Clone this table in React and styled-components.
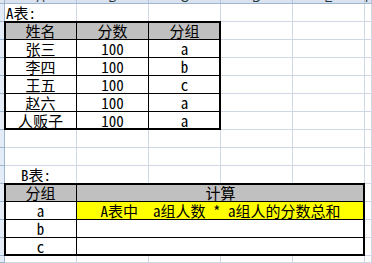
import { Fragment } from "react";
import styled, { createGlobalStyle } from "styled-components";

const GRAY = "#c0c0c0";
const YELLOW = "#ffff00";
const GRID = "#d0d7e5";
const HEAD_LINE = "#9eb6ce";

const GlobalStyle = createGlobalStyle`
  html, body {
    margin: 0;
    padding: 0;
    background: #fff;
  }
  body {
    width: 372px;
    height: 263px;
    overflow: hidden;
  }
`;

const COLS = ["A", "B", "C", "D", "E", "F"];

const tableA = {
  head: ["姓名", "分数", "分组"],
  rows: [
    ["张三", 100, "a"],
    ["李四", 100, "b"],
    ["王五", 100, "c"],
    ["赵六", 100, "a"],
    ["人贩子", 100, "a"],
  ],
};

const tableB = {
  groups: ["a", "b", "c"],
  formula: "A表中  a组人数 * a组人的分数总和", // only the first group has it filled in
};

// thick outline on the table edges: 1px on the gridline + 1px inward
const edges = ({ $top, $left, $right, $bottom }) => {
  const s = [];
  if ($top) s.push("0 -1px 0 #000", "inset 0 1px 0 #000");
  if ($left) s.push("-1px 0 0 #000", "inset 1px 0 0 #000");
  if ($top && $left) s.push("-1px -1px 0 #000");
  if ($right) s.push("inset -1px 0 0 #000");
  if ($bottom) s.push("inset 0 -1px 0 #000");
  return s.length ? s.join(", ") : "none";
};

const Sheet = styled.div`
  display: grid;
  grid-template-columns: 5px repeat(5, 72px) 1fr;
  grid-template-rows: 4px repeat(14, 18px) 1fr;
  width: 372px;
  height: 263px;
  overflow: hidden;
  background: #fff;
  font-family: "Noto Sans Mono CJK SC", "Noto Sans CJK SC", sans-serif;
  font-size: 15px;
  color: #000;
`;

const Corner = styled.div`
  background: #dfe6f0;
  border-right: 1px solid ${HEAD_LINE};
  border-bottom: 1px solid ${HEAD_LINE};
`;

// only the feet of the column letters peek out of the scrolled header
const ColHead = styled.div`
  background: #d9e2ee;
  border-right: 1px solid #b4c4da;
  border-bottom: 1px solid ${HEAD_LINE};
  overflow: hidden;
  text-align: center;
  font: 12px/14px "Liberation Sans", sans-serif;
  color: #1f3a3f;

  span {
    display: block;
    margin-top: -9px;
  }
`;

const RowHead = styled.div`
  background: #e4ecf7;
  border-right: 1px solid ${HEAD_LINE};
  border-bottom: 1px solid ${HEAD_LINE};
`;

const Cell = styled.div`
  grid-column: span ${(p) => p.$span || 1};
  min-width: 0;
  min-height: 0;
  overflow: hidden;
  white-space: pre;
  line-height: 16px;
  padding: 1px 0 0 ${(p) => p.$indent || 0}px;
  text-align: ${(p) => p.$align || "center"};
  background: ${(p) => p.$bg || "#fff"};
  border-right: 1px solid ${(p) => (p.$line ? "#000" : GRID)};
  border-bottom: 1px solid ${(p) => (p.$line ? "#000" : GRID)};
  box-shadow: ${edges};
`;

const blank = (n) => Array.from({ length: n }, () => ({}));

const buildRows = () => {
  const last = tableA.rows.length - 1;
  const lastB = tableB.groups.length - 1;
  return [
    [{ text: "A表:", $align: "left", $indent: 1 }, ...blank(5)],
    [
      ...tableA.head.map((t, i) => ({
        text: t,
        $bg: GRAY,
        $line: true,
        $top: true,
        $left: i === 0,
        $right: i === 2,
      })),
      ...blank(3),
    ],
    ...tableA.rows.map((row, r) => [
      ...row.map((t, i) => ({
        text: String(t),
        $line: true,
        $left: i === 0,
        $right: i === 2,
        $bottom: r === last,
      })),
      ...blank(3),
    ]),
    blank(6),
    blank(6),
    [{ text: "B表:", $align: "left", $indent: 16 }, ...blank(5)],
    [
      { text: "分组", $bg: GRAY, $line: true, $top: true, $left: true },
      { text: "计算", $span: 4, $bg: GRAY, $line: true, $top: true, $right: true },
      {},
    ],
    ...tableB.groups.map((g, r) => [
      { text: g, $line: true, $left: true, $bottom: r === lastB },
      {
        text: r === 0 ? tableB.formula : "",
        $span: 4,
        $bg: r === 0 ? YELLOW : "#fff",
        $line: true,
        $right: true,
        $bottom: r === lastB,
      },
      {},
    ]),
    blank(6),
  ];
};

export default function App() {
  const rows = buildRows();
  return (
    <>
      <GlobalStyle />
      <Sheet>
        <Corner />
        {COLS.map((c) => (
          <ColHead key={c}>
            <span>{c}</span>
          </ColHead>
        ))}
        {rows.map((cells, r) => (
          <Fragment key={r}>
            <RowHead />
            {cells.map(({ text, ...rest }, i) => (
              <Cell key={i} {...rest}>
                {text}
              </Cell>
            ))}
          </Fragment>
        ))}
      </Sheet>
    </>
  );
}
